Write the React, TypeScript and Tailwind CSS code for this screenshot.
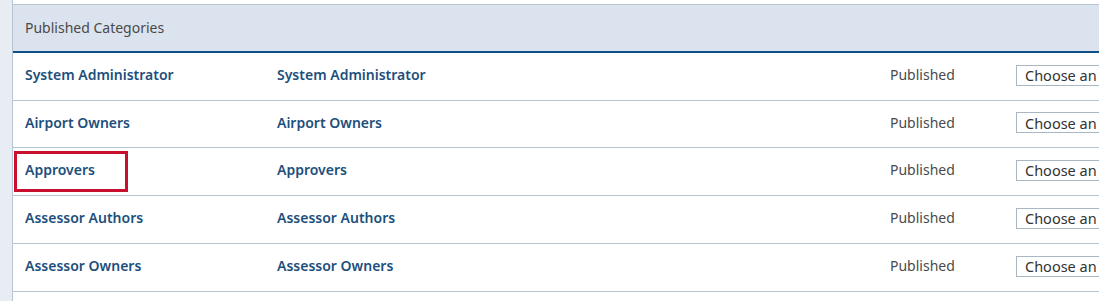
import React from "react";

const rows = [
  { a: "System Administrator", b: "System Administrator", highlight: false, h: "h-[48px]" },
  { a: "Airport Owners", b: "Airport Owners", highlight: false, h: "h-[47px]" },
  { a: "Approvers", b: "Approvers", highlight: true, h: "h-[48px]" },
  { a: "Assessor Authors", b: "Assessor Authors", highlight: false, h: "h-[48px]" },
  { a: "Assessor Owners", b: "Assessor Owners", highlight: false, h: "h-[48px]" },
];

export default function App() {
  return (
    <div
      className="flex w-[1099px] h-[301px] overflow-hidden bg-white"
      style={{ fontFamily: "'Noto Sans', sans-serif" }}
    >
      <div className="w-[13px] shrink-0 bg-[#e7edf3] border-r border-[#b7c4d2]" />
      <div className="flex-1 min-w-0 pt-[4px]">
        <div className="h-[49px] border-t border-[#b7c4d2] bg-[#dae3ee] border-b-2 border-b-[#0e4f86] flex items-center pl-[12px] text-[14px] text-[#4a4a4a] pb-[2px]">
          Published Categories
        </div>
        {rows.map((r, i) => (
          <div
            key={i}
            className={`grid grid-cols-[252px_613px_126px_1fr] items-center ${r.h} border-b border-[#b7c4d2] pl-[12px] text-[14px] leading-[20px] pb-[3px]`}
          >
            <div className="relative">
              {r.highlight && (
                <div className="absolute left-[-11px] top-[-9px] w-[114px] h-[41px] border-[3px] border-[#c8102e]" />
              )}
              <span className="font-semibold text-[#1d4f7c]">{r.a}</span>
            </div>
            <div className="font-semibold text-[#1d4f7c]">{r.b}</div>
            <div className="text-[#4a4a4a]">Published</div>
            <div className="h-[21px] w-[130px] border border-[#a9b6c4] pl-[8px] flex items-center text-[14.5px] text-[#333333] whitespace-nowrap overflow-hidden">
              Choose an option
            </div>
          </div>
        ))}
      </div>
    </div>
  );
}
